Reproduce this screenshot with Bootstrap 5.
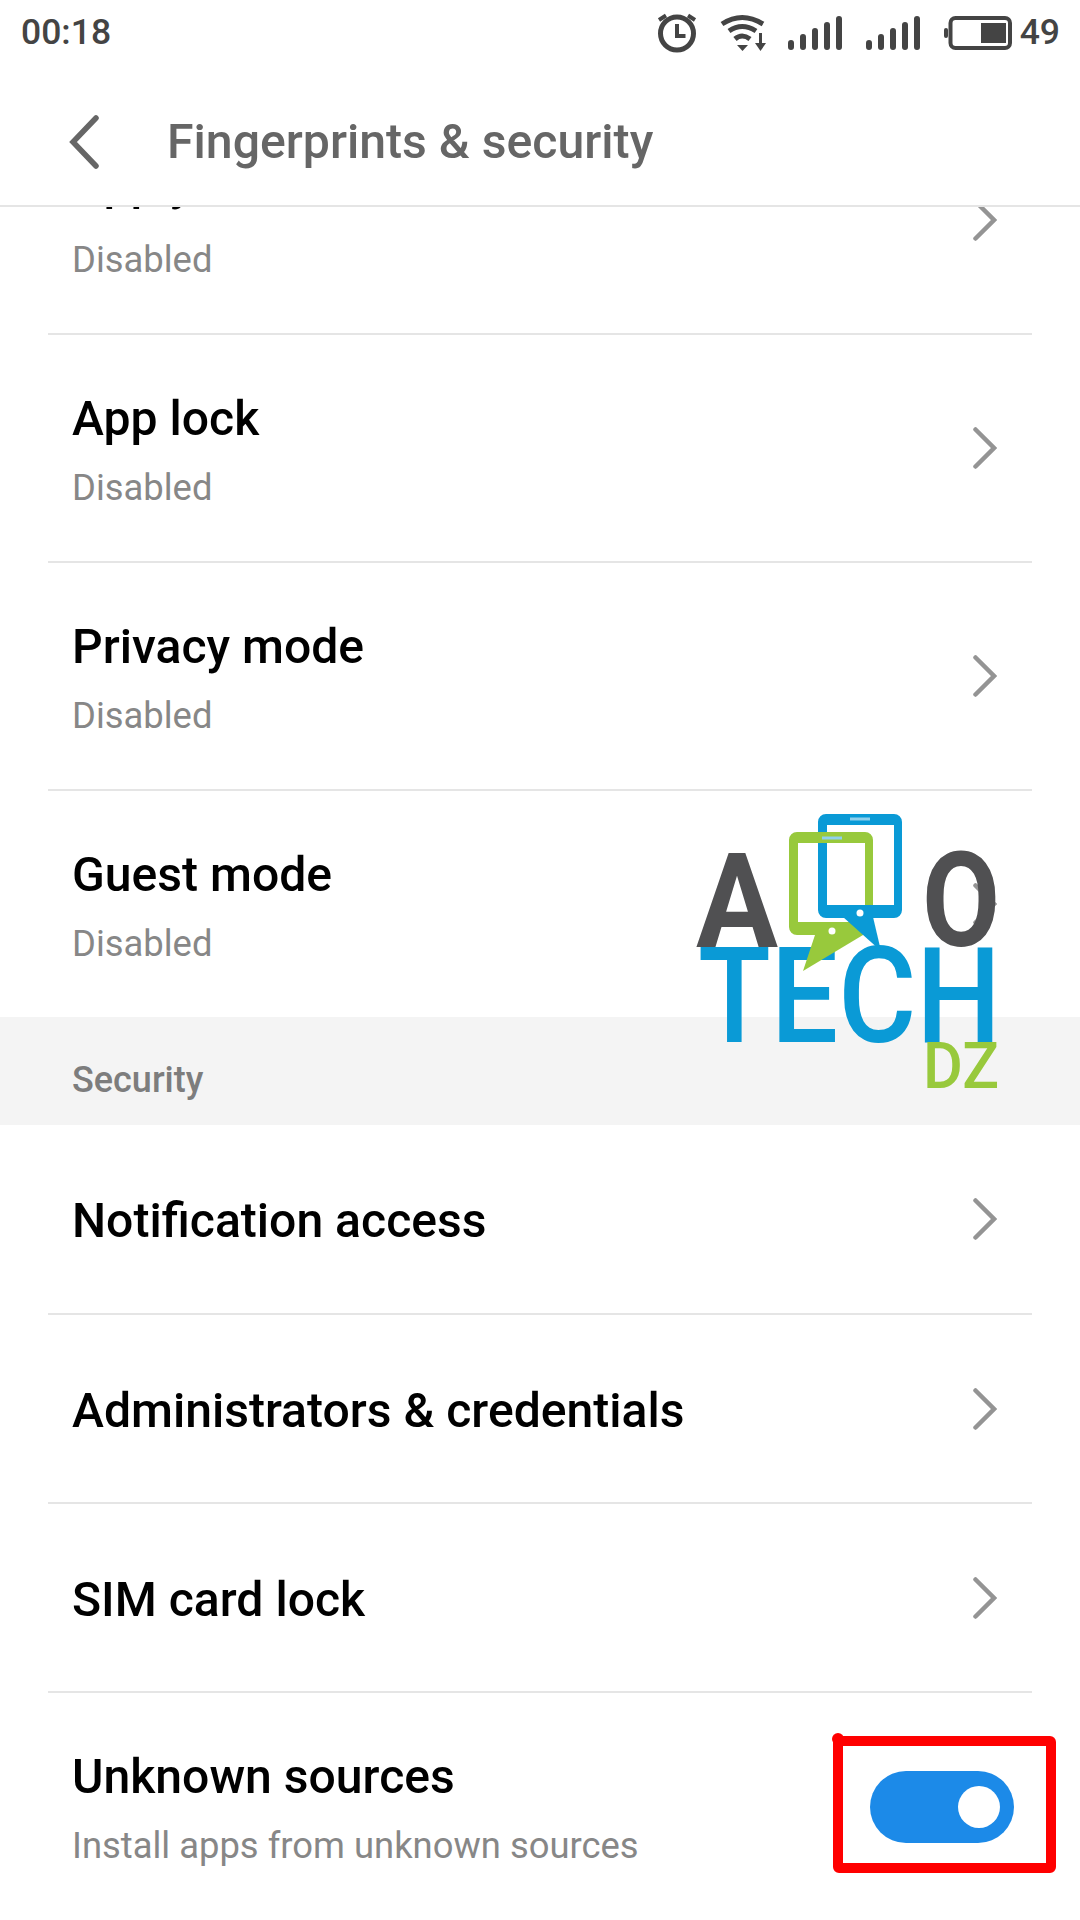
<!DOCTYPE html>
<html lang="en"><head><meta charset="utf-8"><title>Fingerprints &amp; security</title>
<link href="https://cdn.jsdelivr.net/npm/bootstrap@5.3.0/dist/css/bootstrap.min.css" rel="stylesheet">
<style>
html,body{width:1080px;height:1920px;overflow:hidden;background:#fff;font-family:Roboto,sans-serif}
.screen{width:1080px;height:1920px;position:relative;overflow:hidden}
.status{height:66px;padding:0 20px 0 21px;color:#444;font-size:35.5px;font-weight:500;background:#fff;position:relative;z-index:2}
.status svg{display:block;flex:none}
.ic-wifi{margin:0 22px 0 23px}
.ic-gap{margin-right:24px}
.batt-num{margin-left:8px}
.topbar{height:141px;border-bottom:2px solid #e5e5e5;padding:13px 0 0 68px;background:#fff;position:relative;z-index:2}
.topbar h1{font-size:48.2px;font-weight:500;color:#666;margin:0 0 0 67px;line-height:1}
.setrow{margin:0 48px;padding:0 18px 0 24px;border-bottom:2px solid #e5e5e5}
.r-first{margin-top:-100px}
.r-two{height:228px}
.r-guest{height:226px;border-bottom:0}
.r-a{height:190px}
.r-one{height:189px}
.r-last{border-bottom:0;height:227px}
.txt{padding-top:4px}
.ttl{font-size:48.1px;font-weight:500;color:#000;line-height:56px}
.ttl-hidden{margin-top:-8px;padding-bottom:8px}
.sub{font-size:36.4px;color:#878787;line-height:44px;margin-top:19px}
.chev{margin-right:17px;flex:none;display:block}
.sect{height:108px;background:#f4f4f4;padding:18px 0 0 72px;color:#7d7d7d;font-size:36px;font-weight:500}
.logo{position:absolute;left:690px;top:805px;z-index:1}
.redbox{position:absolute;left:833px;top:1736px;width:223px;height:137px;border:10px solid #f00;border-radius:6px;z-index:1}
.redbox::before{content:"";position:absolute;left:-11px;top:-13px;width:12px;height:12px;border-radius:50%;background:#f00}
.tog{width:144px;height:72px;border-radius:36px;background:#1c8ae8;padding:15px 14px;flex:none}
.tog i{display:block;width:42px;height:42px;border-radius:50%;background:#fff}
</style></head><body>
<div class="screen">
<div class="status d-flex justify-content-between align-items-center">
<span>00:18</span>
<div class="d-flex align-items-center">
<svg width="40" height="40" viewBox="0 0 40 40"><circle cx="20" cy="20.5" r="16.5" fill="none" stroke="#444" stroke-width="5"/><path d="M20 11v12h8.500" fill="none" stroke="#444" stroke-width="4"/><path d="M2 7l7-4.500M38 7l-7-4.500" stroke="#444" stroke-width="4"/></svg>
<svg class="ic-wifi" width="46" height="38" viewBox="0 0 46 38"><path d="M2 10Q22-3 43 10M9 17Q22 8 36 17M15 25Q22 19 30 25" fill="none" stroke="#444" stroke-width="5"/><path d="M17 31h11l-5.500 6z" fill="#444"/><path d="M40.500 19v16" stroke="#444" stroke-width="3" fill="none"/><path d="M35 29h11l-5.500 8z" fill="#444"/></svg>
<svg class="ic-gap" width="54" height="36" viewBox="0 0 54 36"><path d="M3 28v4M15 22v10M27 16v16M39 10v22M51 4v28" fill="none" stroke="#444" stroke-width="6" stroke-linecap="round"/></svg>
<svg class="ic-gap" width="54" height="36" viewBox="0 0 54 36"><path d="M3 28v4M15 22v10M27 16v16M39 10v22M51 4v28" fill="none" stroke="#444" stroke-width="6" stroke-linecap="round"/></svg>
<svg width="68" height="34" viewBox="0 0 68 34"><rect x="6.500" y="2" width="59.500" height="30" rx="5" fill="none" stroke="#444" stroke-width="4"/><rect x="37" y="7" width="25" height="20" fill="#444"/><rect x="0" y="12" width="4" height="10" rx="2" fill="#444"/></svg>
<span class="batt-num">49</span>
</div></div>
<div class="topbar d-flex align-items-center">
<svg width="32" height="54" viewBox="0 0 32 54"><path d="M28 3L5 27l23 24" fill="none" stroke="#666" stroke-width="5.500" stroke-linecap="round"/></svg>
<h1>Fingerprints &amp; security</h1>
</div>
<div class="setrow r-two r-first d-flex justify-content-between align-items-center"><div class="txt"><div class="ttl ttl-hidden">Apply</div><div class="sub">Disabled</div></div><svg class="chev" width="24" height="42" viewBox="0 0 24 42"><path d="M2.500 2.500L21 21 2.500 39.500" fill="none" stroke="#949494" stroke-width="4.500" stroke-linecap="round"/></svg></div>
<div class="setrow r-two d-flex justify-content-between align-items-center"><div class="txt"><div class="ttl">App lock</div><div class="sub">Disabled</div></div><svg class="chev" width="24" height="42" viewBox="0 0 24 42"><path d="M2.500 2.500L21 21 2.500 39.500" fill="none" stroke="#949494" stroke-width="4.500" stroke-linecap="round"/></svg></div>
<div class="setrow r-two d-flex justify-content-between align-items-center"><div class="txt"><div class="ttl">Privacy mode</div><div class="sub">Disabled</div></div><svg class="chev" width="24" height="42" viewBox="0 0 24 42"><path d="M2.500 2.500L21 21 2.500 39.500" fill="none" stroke="#949494" stroke-width="4.500" stroke-linecap="round"/></svg></div>
<div class="setrow r-guest d-flex justify-content-between align-items-center"><div class="txt"><div class="ttl">Guest mode</div><div class="sub">Disabled</div></div><svg class="chev" width="24" height="42" viewBox="0 0 24 42"><path d="M2.500 2.500L21 21 2.500 39.500" fill="none" stroke="#949494" stroke-width="4.500" stroke-linecap="round"/></svg></div>
<div class="sect d-flex align-items-center">Security</div>
<div class="setrow r-a d-flex justify-content-between align-items-center"><div class="ttl txt">Notification access</div><svg class="chev" width="24" height="42" viewBox="0 0 24 42"><path d="M2.500 2.500L21 21 2.500 39.500" fill="none" stroke="#949494" stroke-width="4.500" stroke-linecap="round"/></svg></div>
<div class="setrow r-one d-flex justify-content-between align-items-center"><div class="ttl txt">Administrators &amp; credentials</div><svg class="chev" width="24" height="42" viewBox="0 0 24 42"><path d="M2.500 2.500L21 21 2.500 39.500" fill="none" stroke="#949494" stroke-width="4.500" stroke-linecap="round"/></svg></div>
<div class="setrow r-one d-flex justify-content-between align-items-center"><div class="ttl txt">SIM card lock</div><svg class="chev" width="24" height="42" viewBox="0 0 24 42"><path d="M2.500 2.500L21 21 2.500 39.500" fill="none" stroke="#949494" stroke-width="4.500" stroke-linecap="round"/></svg></div>
<div class="setrow r-last d-flex justify-content-between align-items-center"><div class="txt"><div class="ttl">Unknown sources</div><div class="sub">Install apps from unknown sources</div></div><div class="tog d-flex justify-content-end"><i></i></div></div>
<svg class="logo" width="320" height="290" viewBox="0 0 320 290">
<text x="6" y="142" font-family="Roboto" font-weight="700" font-size="132" textLength="82" lengthAdjust="spacingAndGlyphs" fill="#505052">A</text>
<text x="232" y="141" font-family="Roboto" font-weight="700" font-size="132" textLength="78" lengthAdjust="spacingAndGlyphs" fill="#505052">O</text>
<text x="8" y="237" font-family="Roboto" font-weight="500" font-size="134" textLength="303" lengthAdjust="spacingAndGlyphs" fill="#0a9ad6">TECH</text>
<text x="233" y="283" font-family="Roboto" font-weight="500" font-size="64" textLength="76" lengthAdjust="spacingAndGlyphs" fill="#98c93c">DZ</text>
<path fill-rule="evenodd" d="M107 27h68a8 8 0 0 1 8 8v87a8 8 0 0 1-8 8H107a8 8 0 0 1-8-8V35a8 8 0 0 1 8-8zM108 38v79h67V38z" fill="#98c93c"/>
<path d="M125 130h48l-60 36z" fill="#98c93c"/>
<path fill-rule="evenodd" d="M136 9h68a8 8 0 0 1 8 8v88a8 8 0 0 1-8 8H136a8 8 0 0 1-8-8V17a8 8 0 0 1 8-8zM137 20v80h67V20z" fill="#0a9ad6"/>
<path d="M153 112h30l8 34z" fill="#0a9ad6"/>
<rect x="128" y="27" width="9" height="11" fill="#98c93c"/>
<path d="M160 14h20M132 33h20" stroke="#8fd0ec" stroke-width="3"/>
<circle cx="170" cy="108" r="3.500" fill="#fff"/><circle cx="142" cy="126" r="3.500" fill="#fff"/>
</svg>
<div class="redbox"></div>
</div>
</body></html>
